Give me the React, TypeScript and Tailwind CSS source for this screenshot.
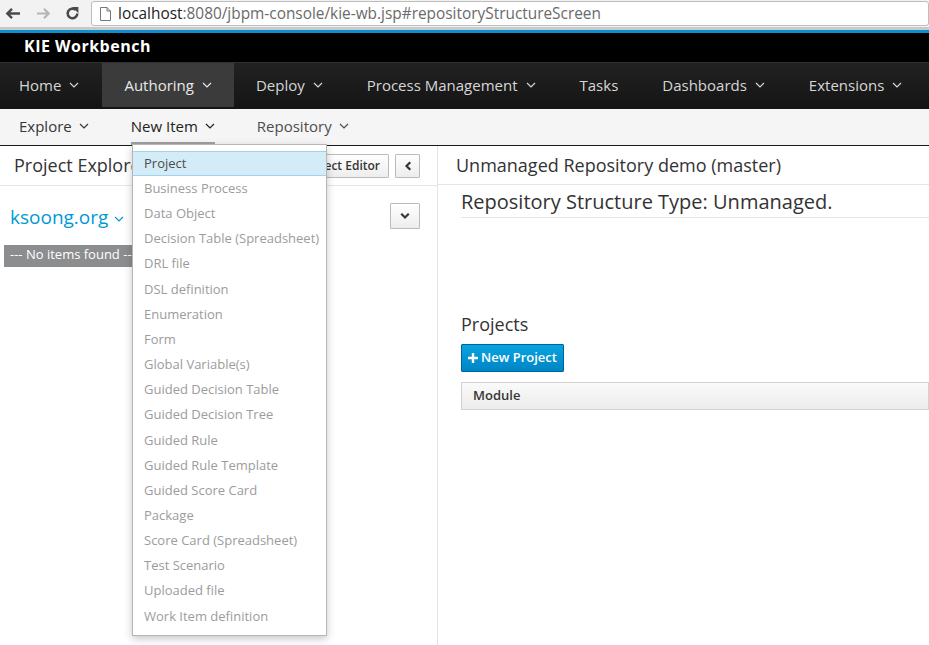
import React from "react";

const Chevron = ({ className = "" }: { className?: string }) => (
  <svg width="10" height="6" viewBox="0 0 10 6" className={className} fill="none" stroke="currentColor" strokeWidth="1.2">
    <path d="M1 1l4 4 4-4" />
  </svg>
);

const BoldChevron = ({ dir }: { dir: "down" | "left" }) => (
  <svg width="10" height="10" viewBox="0 0 10 10" fill="none" stroke="#363636" strokeWidth="2.2" strokeLinecap="square">
    {dir === "down" ? <path d="M2 3.5l3 3 3-3" /> : <path d="M6.5 2l-3 3 3 3" />}
  </svg>
);

const mainNav = [
  { label: "Home", caret: true },
  { label: "Authoring", caret: true, active: true },
  { label: "Deploy", caret: true },
  { label: "Process Management", caret: true },
  { label: "Tasks", caret: false },
  { label: "Dashboards", caret: true },
  { label: "Extensions", caret: true },
];

const menuItems = [
  "Project",
  "Business Process",
  "Data Object",
  "Decision Table (Spreadsheet)",
  "DRL file",
  "DSL definition",
  "Enumeration",
  "Form",
  "Global Variable(s)",
  "Guided Decision Table",
  "Guided Decision Tree",
  "Guided Rule",
  "Guided Rule Template",
  "Guided Score Card",
  "Package",
  "Score Card (Spreadsheet)",
  "Test Scenario",
  "Uploaded file",
  "Work Item definition",
];

function BrowserBar() {
  return (
    <div className="h-[30px] bg-[#f2f2f2] border-b-[3px] border-[#c9c9c9] flex items-center">
      <div className="flex items-center h-[26px] pl-[5px] gap-[15px]">
        <svg width="16" height="13" viewBox="0 0 16 13" fill="none" stroke="#4a4a4a" strokeWidth="2.4">
          <path d="M15 6.5H2.5M7 1.8L2.3 6.5 7 11.2" />
        </svg>
        <svg width="15" height="13" viewBox="0 0 15 13" fill="none" stroke="#b5b5b5" strokeWidth="2.2">
          <path d="M1 6.5h11.5M8 1.8l4.7 4.7L8 11.2" />
        </svg>
        <svg width="15" height="15" viewBox="0 0 14 14" fill="none" stroke="#4a4a4a" strokeWidth="2.4" className="ml-[-1px]">
          <path d="M11.5 7A4.5 4.5 0 1 1 10 3.6" />
          <path d="M8 1.5h4v4z" fill="#4a4a4a" strokeWidth="1" />
        </svg>
      </div>
      <div className="ml-[11px] flex-1 h-[25px] self-start mt-[1px] bg-white border border-[#bdbdbd] rounded-[3px] flex items-center pl-[8px] text-[15.4px]">
        <svg width="11" height="14" viewBox="0 0 11 14" fill="none" stroke="#777" strokeWidth="1">
          <path d="M0.5 0.5h6.5l3.5 3.5v9.5h-10z M7 0.5v3.5h3.5" />
        </svg>
        <span className="ml-[7px] text-[#222]">localhost</span>
        <span className="text-[#6a6a6a]">:8080/jbpm-console/kie-wb.jsp#repositoryStructureScreen</span>
      </div>
    </div>
  );
}

export default function App() {
  return (
    <div className="w-[929px] h-[645px] overflow-hidden bg-white relative font-['Open_Sans',sans-serif] text-[#363636]">
      <BrowserBar />
      <div className="h-[3px] bg-[#0f8fd2]" />
      <div className="h-[29px] bg-black flex items-center pl-[24px] pb-[3px]">
        <span className="text-white font-bold text-[16px] tracking-[0.5px]">KIE Workbench</span>
      </div>

      {/* main navigation */}
      <nav className="h-[47px] bg-gradient-to-b from-[#222] to-[#141414] flex border-t border-[#303030] pb-[2px]">
        {mainNav.map((n, i) => (
          <div
            key={n.label}
            className={`flex items-center gap-[8px] text-[15px] text-[#d6d6d6] ${i === 0 ? "pl-[19px] pr-[23px]" : "px-[22px]"} ${n.active ? "bg-[#3b3b3b] text-[#e8e8e8]" : ""}`}
          >
            <span>{n.label}</span>
            {n.caret && <Chevron />}
          </div>
        ))}
      </nav>

      {/* secondary navigation */}
      <div className="h-[36px] bg-[#f5f5f5] flex items-stretch">
        <div className="flex items-center gap-[7px] text-[15px] pl-[19px] pr-[21px] pb-[2px]">
          <span>Explore</span>
          <Chevron />
        </div>
        <div className="flex items-center px-[21px]">
          <div className="h-full flex items-center gap-[7px] text-[15px] border-b-[3px] border-[#a0a0a0] pt-[1px] text-[#222]">
            <span>New Item</span>
            <Chevron />
          </div>
        </div>
        <div className="flex items-center gap-[7px] text-[15px] px-[21px] pb-[2px] text-[#4d4d4d]">
          <span>Repository</span>
          <Chevron />
        </div>
      </div>

      {/* body */}
      <div className="flex border-t border-[#1a1a1a] h-full">
        <div className="w-[438px] shrink-0 border-r border-[#e3e3e3]">
          <div className="h-[40px] border-b border-[#e5e5e5] flex items-center pl-[14px] pr-[17px]">
            <span className="text-[18px] text-[#333]">Project Explorer</span>
            <div className="ml-auto flex gap-[6px]">
              <button className="h-[24px] px-[8px] text-[12px] font-semibold border border-[#bbb] rounded-[1px] bg-gradient-to-b from-white to-[#ededed] text-[#363636]">
                Project Editor
              </button>
              <button className="h-[24px] w-[25px] flex items-center justify-center border border-[#bbb] rounded-[1px] bg-gradient-to-b from-white to-[#ededed]">
                <BoldChevron dir="left" />
              </button>
            </div>
          </div>
          <div className="flex items-center pl-[10px] pr-[17px] mt-[17px]">
            <span className="text-[19px] text-[#0099d3]">ksoong.org</span>
            <Chevron className="ml-[6px] mt-[4px] text-[#0099d3]" />
            <button className="ml-auto h-[26px] w-[30px] flex items-center justify-center border border-[#bbb] rounded-[1px] bg-gradient-to-b from-white to-[#ededed] mb-[2px]">
              <BoldChevron dir="down" />
            </button>
          </div>
          <div className="ml-[4px] mt-[13px] h-[22px] w-fit bg-[#8b8d8f] text-white text-[13px] flex items-center px-[6px] pb-[1px]">
            --- No items found ---
          </div>
        </div>

        <div className="flex-1 min-w-0">
          <div className="h-[39px] border-b border-[#e5e5e5] flex items-center pl-[18px] text-[18px] text-[#333]">
            Unmanaged Repository demo (master)
          </div>
          <div className="pl-[23px]">
            <div className="h-[33px] border-b border-[#e5e5e5] flex items-center text-[20px] text-[#333] pt-[1px]">
              Repository Structure Type: Unmanaged.
            </div>
            <div className="mt-[93px] text-[18px] text-[#333]">Projects</div>
            <button className="mt-[6px] h-[28px] px-[6px] flex items-center gap-[3px] bg-gradient-to-b from-[#0aa3e0] to-[#0085c5] border border-[#00659c] text-white text-[13px] font-semibold rounded-[1px]">
              <svg width="10" height="10" viewBox="0 0 10 10" fill="white">
                <path d="M3.8 0h2.4v3.8H10v2.4H6.2V10H3.8V6.2H0V3.8h3.8z" />
              </svg>
              New Project
            </button>
            <div className="mt-[10px] h-[28px] border border-[#d1d1d1] bg-gradient-to-b from-[#fafafa] to-[#ececec] flex items-center pl-[11px] text-[13px] font-semibold text-[#363636]">
              Module
            </div>
          </div>
        </div>
      </div>

      {/* New Item dropdown */}
      <div className="absolute left-[132px] top-[144px] w-[195px] bg-white border border-[#b5b5b5] shadow-[0_3px_8px_rgba(0,0,0,0.22)] pt-[6px] pb-[6px]">
        {menuItems.map((m, i) => (
          <div
            key={m}
            className={`h-[25.17px] flex items-center pl-[11px] text-[13px] ${i === 0 ? "bg-[#d4ebf8] border-y border-[#a4d2ee] text-[#4d4d4d]" : "text-[#9c9c9c]"}`}
          >
            {m}
          </div>
        ))}
      </div>
    </div>
  );
}
